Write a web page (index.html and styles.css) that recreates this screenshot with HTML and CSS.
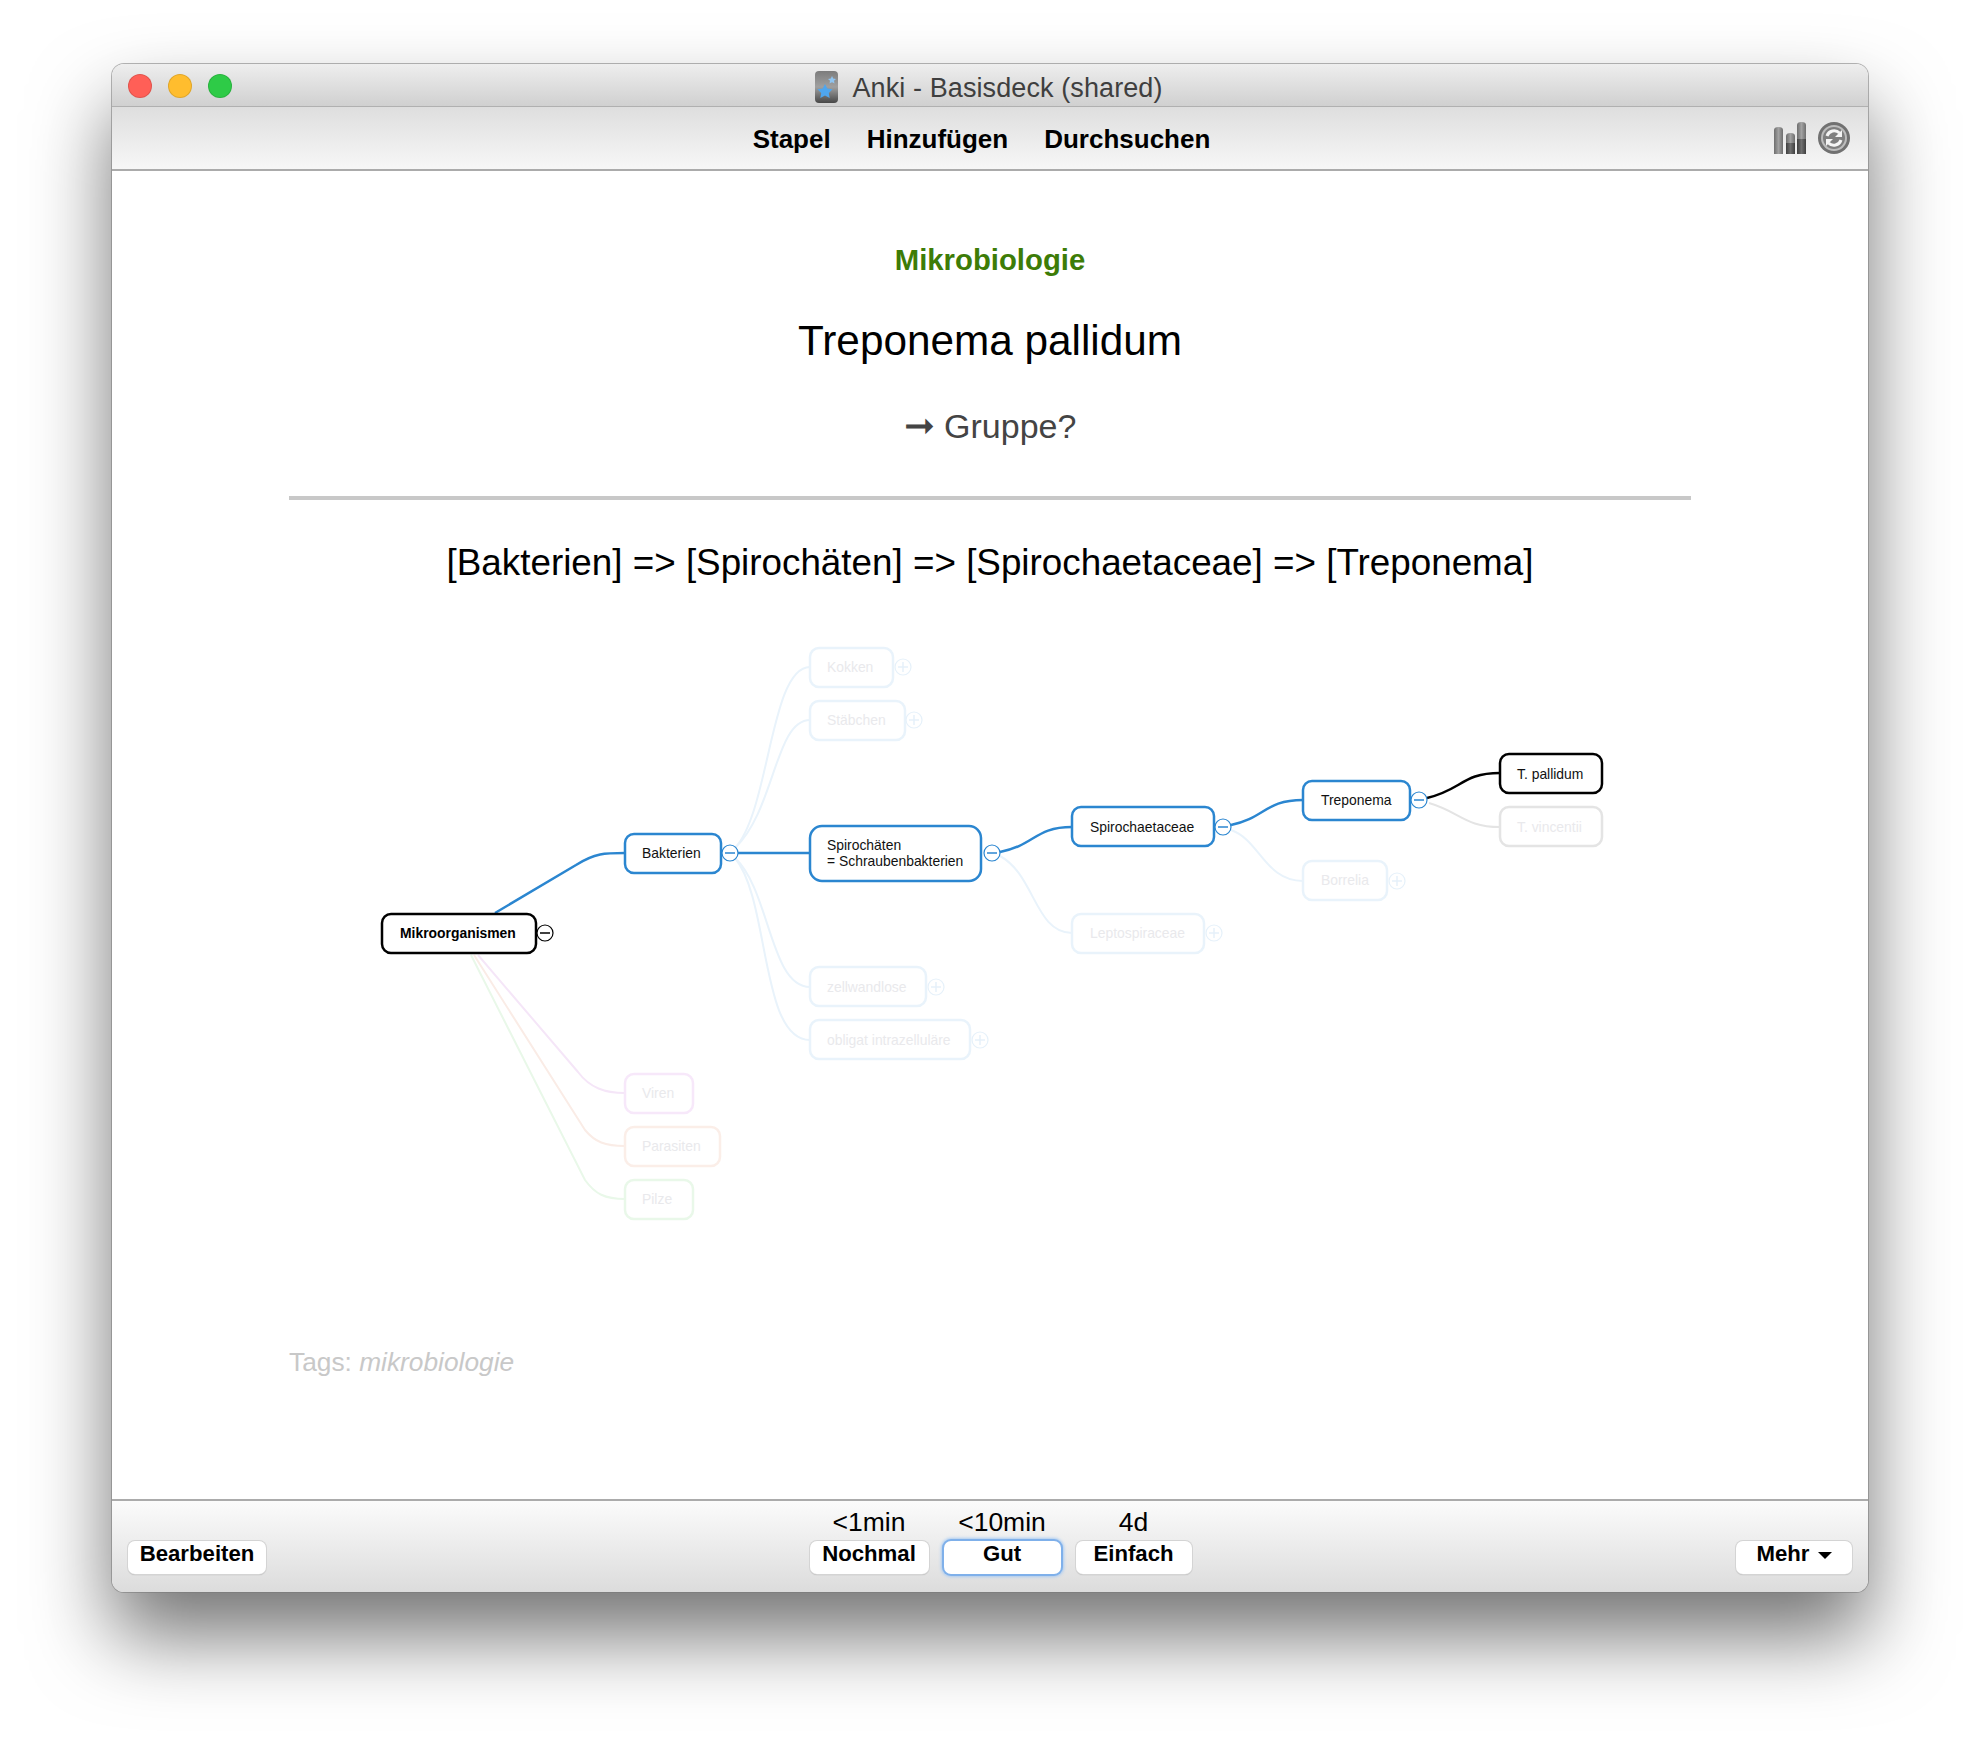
FILE: index.html
```html
<!DOCTYPE html>
<html lang="de">
  <head>
    <meta charset="UTF-8" />
    <title>Anki - Basisdeck (shared)</title>
    <link rel="stylesheet" href="styles.css">
  </head>
  <body>
    <div class="window">
      <div class="titlebar">
        <div class="lights">
          <span class="light red"></span>
          <span class="light orange"></span>
          <span class="light green"></span>
        </div>
        <svg class="app-icon" width="23" height="32" viewBox="0 0 23 32">
          <defs>
            <linearGradient id="appbg" x1="0" y1="0" x2="0" y2="1">
              <stop offset="0" stop-color="#7c7c7c"/>
              <stop offset="0.5" stop-color="#a0a0a0"/>
              <stop offset="1" stop-color="#474747"/>
            </linearGradient>
          </defs>
          <rect x="0" y="0" width="23" height="32" rx="4" fill="url(#appbg)"/>
          <path d="M10 13l2.300 4.600 5.200.7-3.700 3.600.9 5.100-4.700-2.400-4.700 2.400.9-5.100-3.700-3.600 5.200-.7z" fill="#4fa6ee"/>
          <path d="M17 5l1.200 2.500 2.800.4-2 1.900.5 2.800-2.500-1.300-2.500 1.300.5-2.800-2-1.900 2.800-.4z" fill="#8fc4f0"/>
        </svg>
        <span class="title-text">Anki - Basisdeck (shared)</span>
      </div>
      <div class="toolbar">
        <nav class="nav">
          <a>Stapel</a>
          <a>Hinzufügen</a>
          <a>Durchsuchen</a>
        </nav>
        <div class="tool-icons">
          <svg width="33" height="32" viewBox="0 0 33 32">
            <defs>
              <linearGradient id="barA" x1="0" y1="0" x2="1" y2="0">
                <stop offset="0" stop-color="#6e6e6e"/>
                <stop offset="0.5" stop-color="#a2a2a2"/>
                <stop offset="1" stop-color="#6e6e6e"/>
              </linearGradient>
              <linearGradient id="barB" x1="0" y1="0" x2="1" y2="0">
                <stop offset="0" stop-color="#3f3f3f"/>
                <stop offset="0.5" stop-color="#707070"/>
                <stop offset="1" stop-color="#3f3f3f"/>
              </linearGradient>
            </defs>
            <path d="M0 32V8q0-3 4.500-3T9 8v24z" fill="url(#barA)"/>
            <path d="M12 32V14q0-3 4.500-3t4.500 3v18z" fill="url(#barA)"/>
            <rect x="12" y="21" width="9" height="11" fill="url(#barB)"/>
            <path d="M23 32V3q0-3 4.500-3T32 3v29z" fill="url(#barA)"/>
            <rect x="23" y="17" width="9" height="15" fill="url(#barB)"/>
          </svg>
          <svg width="32" height="32" viewBox="0 0 32 32">
            <circle cx="16" cy="16" r="16" fill="#717171"/>
            <circle cx="16" cy="16" r="13" fill="#bdbdbd"/>
            <circle cx="16" cy="16" r="11" fill="#7f7f7f"/>
            <path d="M9 14a7.500 7.500 0 0 1 12.500-3" fill="none" stroke="#f4f4f4" stroke-width="3"/>
            <path d="M23 18a7.500 7.500 0 0 1-12.500 3" fill="none" stroke="#f4f4f4" stroke-width="3"/>
            <path d="M24 8v7h-7z" fill="#f4f4f4"/>
            <path d="M8 24v-7h7z" fill="#f4f4f4"/>
          </svg>
        </div>
      </div>
      <main class="card">
        <div class="deck">Mikrobiologie</div>
        <div class="question">Treponema pallidum</div>
        <div class="prompt"><span class="arrow">➞</span> Gruppe?</div>
        <hr class="divider">
        <div class="answer">[Bakterien] =&gt; [Spirochäten] =&gt; [Spirochaetaceae] =&gt; [Treponema]</div>
        <svg class="mindmap" width="1756" height="620" viewBox="112 630 1756 620">
          <g class="faint-blue-line">
            <path d="M735 848C770 810 770 667 810 667"/>
            <path d="M735 848C775 810 775 720 810 720"/>
            <path d="M735 858C770 890 770 987 810 987"/>
            <path d="M735 858C770 900 760 1040 810 1040"/>
            <path d="M1231 830C1260 840 1265 881 1303 881"/>
            <path d="M1000 856C1035 875 1035 933 1072 933"/>
          </g>
          <path class="link-viren" d="M478 955L578 1072C590 1088 605 1093 625 1093"/>
          <path class="link-parasiten" d="M474 955L585 1130C595 1142 605 1146 625 1146"/>
          <path class="link-pilze" d="M471 955L585 1180C595 1194 605 1199 625 1199"/>
          <path class="link-grey" d="M1429 803C1460 812 1465 827 1500 827"/>
          <path class="link-blue" d="M495 913L576 865C595 853 605 853 625 853"/>
          <path class="link-blue" d="M738 853H810"/>
          <path class="link-blue" d="M1000 852C1035 845 1035 827 1072 827"/>
          <path class="link-blue" d="M1231 825C1265 818 1265 800 1303 800"/>
          <path class="link-black" d="M1427 798C1462 790 1462 773 1500 773"/>

          <rect class="node black" x="382" y="914" width="154" height="39" rx="9"/>
          <text class="label bold" x="400" y="938">Mikroorganismen</text>
          <circle class="toggle black" cx="545" cy="933" r="8"/>
          <path class="sign black" d="M540 933h10"/>

          <rect class="node blue" x="625" y="834" width="96" height="39" rx="9"/>
          <text class="label" x="642" y="858">Bakterien</text>
          <circle class="toggle blue" cx="730" cy="853" r="8"/>
          <path class="sign blue" d="M725 853h10"/>

          <rect class="node blue" x="810" y="826" width="171" height="55" rx="12"/>
          <text class="label" x="827" y="850">Spirochäten</text>
          <text class="label" x="827" y="866">= Schraubenbakterien</text>
          <circle class="toggle blue" cx="992" cy="853" r="8"/>
          <path class="sign blue" d="M987 853h10"/>

          <rect class="node blue" x="1072" y="807" width="142" height="39" rx="9"/>
          <text class="label" x="1090" y="832">Spirochaetaceae</text>
          <circle class="toggle blue" cx="1223" cy="827" r="8"/>
          <path class="sign blue" d="M1218 827h10"/>

          <rect class="node blue" x="1303" y="781" width="107" height="39" rx="9"/>
          <text class="label" x="1321" y="805">Treponema</text>
          <circle class="toggle blue" cx="1419" cy="800" r="8"/>
          <path class="sign blue" d="M1414 800h10"/>

          <rect class="node black" x="1500" y="754" width="102" height="39" rx="9"/>
          <text class="label" x="1517" y="779">T. pallidum</text>

          <rect class="node faint grey" x="1500" y="807" width="102" height="39" rx="9"/>
          <text class="label faint-text" x="1517" y="832">T. vincentii</text>

          <rect class="node faint fblue" x="810" y="648" width="83" height="39" rx="9"/>
          <text class="label faint-text" x="827" y="672">Kokken</text>
          <circle class="toggle fblue" cx="903" cy="667" r="8"/>
          <path class="sign fblue" d="M898 667h10M903 662v10"/>

          <rect class="node faint fblue" x="810" y="701" width="95" height="39" rx="9"/>
          <text class="label faint-text" x="827" y="725">Stäbchen</text>
          <circle class="toggle fblue" cx="914" cy="720" r="8"/>
          <path class="sign fblue" d="M909 720h10M914 715v10"/>

          <rect class="node faint fblue" x="1303" y="861" width="84" height="39" rx="9"/>
          <text class="label faint-text" x="1321" y="885">Borrelia</text>
          <circle class="toggle fblue" cx="1397" cy="881" r="8"/>
          <path class="sign fblue" d="M1392 881h10M1397 876v10"/>

          <rect class="node faint fblue" x="1072" y="914" width="132" height="39" rx="9"/>
          <text class="label faint-text" x="1090" y="938">Leptospiraceae</text>
          <circle class="toggle fblue" cx="1214" cy="933" r="8"/>
          <path class="sign fblue" d="M1209 933h10M1214 928v10"/>

          <rect class="node faint fblue" x="810" y="967" width="116" height="39" rx="9"/>
          <text class="label faint-text" x="827" y="992">zellwandlose</text>
          <circle class="toggle fblue" cx="936" cy="987" r="8"/>
          <path class="sign fblue" d="M931 987h10M936 982v10"/>

          <rect class="node faint fblue" x="810" y="1020" width="160" height="39" rx="9"/>
          <text class="label faint-text" x="827" y="1045">obligat intrazelluläre</text>
          <circle class="toggle fblue" cx="980" cy="1040" r="8"/>
          <path class="sign fblue" d="M975 1040h10M980 1035v10"/>

          <rect class="node faint fviren" x="625" y="1074" width="68" height="39" rx="9"/>
          <text class="label faint-text" x="642" y="1098">Viren</text>

          <rect class="node faint fparasiten" x="625" y="1127" width="95" height="39" rx="9"/>
          <text class="label faint-text" x="642" y="1151">Parasiten</text>

          <rect class="node faint fpilze" x="625" y="1180" width="68" height="39" rx="9"/>
          <text class="label faint-text" x="642" y="1204">Pilze</text>
        </svg>
        <div class="tags">Tags: <em>mikrobiologie</em></div>
      </main>
      <div class="footer">
        <button class="btn btn-edit">Bearbeiten</button>
        <div class="answers">
          <div class="answer-col nochmal">
            <span class="due">&lt;1min</span>
            <button class="btn">Nochmal</button>
          </div>
          <div class="answer-col gut">
            <span class="due">&lt;10min</span>
            <button class="btn focused">Gut</button>
          </div>
          <div class="answer-col einfach">
            <span class="due">4d</span>
            <button class="btn">Einfach</button>
          </div>
        </div>
        <button class="btn btn-more">Mehr <span class="caret"></span></button>
      </div>
    </div>
  </body>
</html>
```

FILE: styles.css
```css
html, body {
  margin: 0;
  padding: 0;
}
body {
  width: 1980px;
  height: 1752px;
  box-sizing: border-box;
  padding: 64px 112px 0;
  background: #fff;
  font-family: "Liberation Sans", Arial, sans-serif;
  overflow: hidden;
}
.window {
  height: 1528px;
  display: flex;
  flex-direction: column;
  border-radius: 12px;
  box-shadow: 0 0 0 1px rgba(120, 120, 120, 0.55), 0 44px 80px rgba(0, 0, 0, 0.55);
}

/* title bar */
.titlebar {
  height: 42px;
  flex: none;
  display: flex;
  align-items: center;
  justify-content: center;
  gap: 12px;
  position: relative;
  background: linear-gradient(#eeeeee, #d0d0d0);
  border-bottom: 1px solid #b0b0b0;
  border-radius: 12px 12px 0 0;
}
.lights {
  position: absolute;
  left: 16px;
  top: 10px;
  display: flex;
  gap: 16px;
}
.light {
  width: 22px;
  height: 22px;
  border-radius: 50%;
  border: 1px solid rgba(0, 0, 0, 0.12);
}
.red { background: #ff5f57; }
.orange { background: #ffbd2e; }
.green { background: #2ecb47; }
.app-icon { margin-left: -2px; margin-top: 3px; }
.title-text {
  font-size: 27px;
  letter-spacing: 0.1px;
  color: #3f3f3f;
  margin-top: 6px;
  margin-left: 2px;
}

/* toolbar */
.toolbar {
  height: 62px;
  flex: none;
  display: flex;
  align-items: center;
  justify-content: center;
  position: relative;
  background: linear-gradient(#dedede, #f7f7f7);
  border-bottom: 2px solid #ababab;
}
.nav {
  display: flex;
  gap: 36px;
  font-size: 26px;
  font-weight: bold;
  color: #000;
  margin-left: -17px;
  margin-top: 2px;
}
.tool-icons {
  position: absolute;
  right: 18px;
  top: 15px;
  display: flex;
  gap: 11px;
}

/* card */
.card {
  flex: 1;
  min-height: 0;
  background: #fff;
  padding: 0 177px;
  text-align: center;
  position: relative;
}
.deck {
  margin-top: 71px;
  font-size: 29.300px;
  line-height: 36px;
  font-weight: bold;
  color: #3d7c07;
}
.question {
  margin-top: 38px;
  font-size: 42.300px;
  line-height: 50px;
  color: #000;
}
.prompt {
  margin-top: 40px;
  font-size: 34px;
  line-height: 40px;
  color: #444;
}
.arrow { font-size: 37px; }
.divider {
  margin: 50px 0 0;
  height: 4px;
  border: none;
  background: #c8c8c8;
}
.answer {
  margin-top: 40px;
  font-size: 36.800px;
  line-height: 46px;
  color: #000;
}
.mindmap {
  position: absolute;
  left: 0;
  top: 459px;
}
.tags {
  position: absolute;
  left: 177px;
  top: 1174px;
  font-size: 26.300px;
  line-height: 34px;
  color: #c8c8c8;
}

/* mind map parts */
.mindmap path { fill: none; }
.node { fill: #fff; stroke-width: 2.500; }
.node.blue { stroke: #2b86d0; }
.node.black { stroke: #000; }
.node.grey { stroke: #e4e4e4; }
.node.fblue { stroke: #e9f3fb; }
.node.fviren { stroke: #f7e8fa; }
.node.fparasiten { stroke: #fbeee8; }
.node.fpilze { stroke: #e9f8e9; }
.label {
  font-size: 13.900px;
  fill: #111;
}
.label.bold { font-weight: bold; fill: #000; }
.label.faint-text { fill: #e9e9ec; }
.toggle { fill: #fff; stroke-width: 1.200; }
.toggle.blue { stroke: #2b86d0; }
.toggle.black { stroke: #000; }
.toggle.fblue { stroke: #e6f1fa; }
.sign { stroke-width: 1.500; }
.sign.blue { stroke: #2b86d0; }
.sign.black { stroke: #000; }
.sign.fblue { stroke: #e6f1fa; }
.faint-blue-line path { stroke: #e9f3fb; stroke-width: 2; }
.link-blue { stroke: #2b86d0; stroke-width: 2.500; }
.link-black { stroke: #000; stroke-width: 2.500; }
.link-grey { stroke: #e4e4e4; stroke-width: 2; }
.link-viren { stroke: #f5e6f8; stroke-width: 2; }
.link-parasiten { stroke: #faece6; stroke-width: 2; }
.link-pilze { stroke: #e9f8e9; stroke-width: 2; }

/* footer */
.footer {
  height: 93px;
  flex: none;
  display: flex;
  align-items: flex-end;
  justify-content: space-between;
  padding: 0 16px 18px;
  box-sizing: border-box;
  background: linear-gradient(#fbfbfb, #dcdcdc);
  border-top: 2px solid #ababab;
  border-radius: 0 0 12px 12px;
}
.btn {
  height: 33px;
  padding: 0;
  font-family: inherit;
  font-size: 22.200px;
  font-weight: bold;
  line-height: 26px;
  color: #000;
  background: #fff;
  border: none;
  border-radius: 7px;
  box-shadow: 0 0 0 1px #d4d4d4, 0 1px 1px #9a9a9a;
  display: flex;
  justify-content: center;
  align-items: flex-start;
}
.btn-edit { width: 138px; }
.btn-more { width: 116px; gap: 8px; }
.answers {
  display: flex;
  gap: 15px;
  margin-left: -1px;
}
.answer-col {
  display: flex;
  flex-direction: column;
  align-items: center;
}
.nochmal .btn { width: 119px; }
.gut .btn { width: 117px; }
.einfach .btn { width: 116px; }
.due {
  font-size: 26.500px;
  line-height: 30px;
  color: #000;
  margin-bottom: 4px;
}
.btn.focused {
  box-shadow: 0 0 0 2px #7fb0ea, 0 0 3px 3px #a9cbf2;
}
.caret {
  width: 0;
  height: 0;
  margin-top: 11px;
  border-left: 7px solid transparent;
  border-right: 7px solid transparent;
  border-top: 7px solid #000;
}
```
